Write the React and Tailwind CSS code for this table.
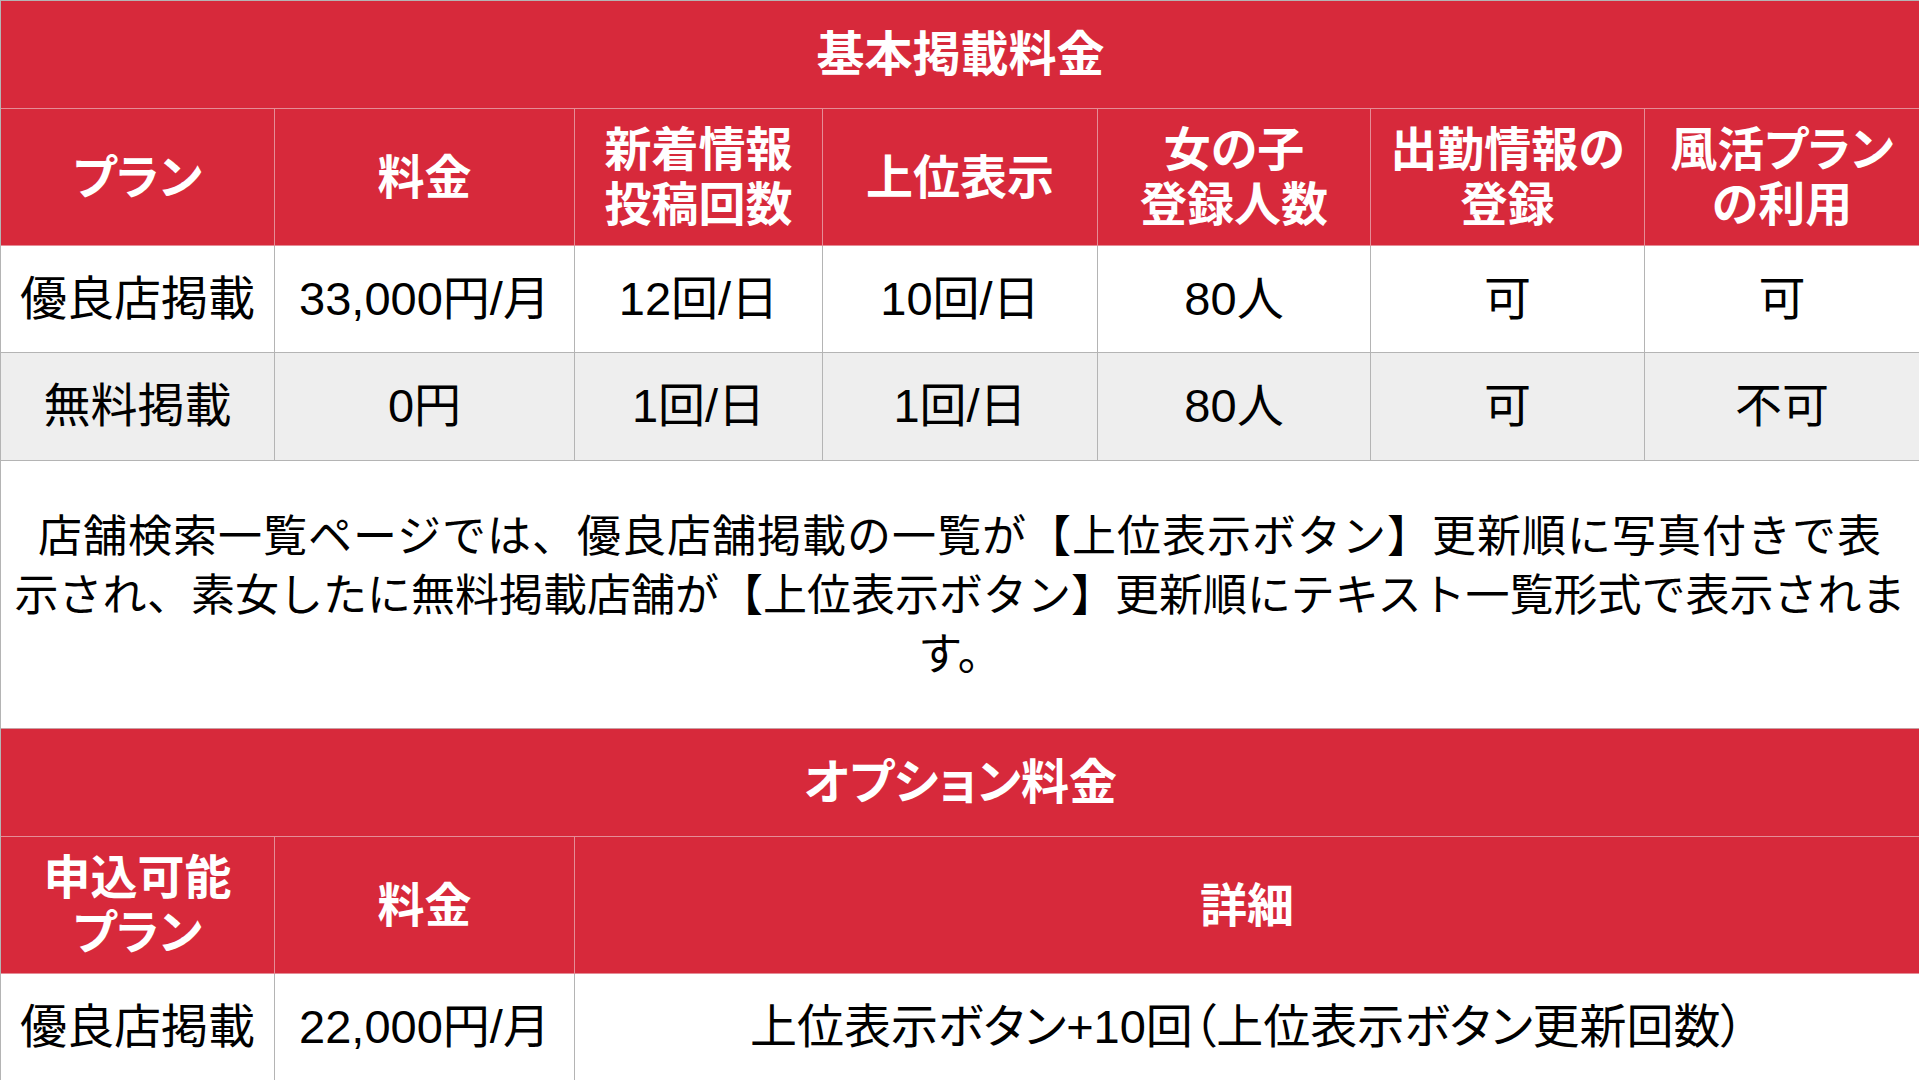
// App.jsx – 掲載料金表
const FONT = { fontFamily: '"Liberation Sans", "Noto Sans CJK JP", sans-serif' };

const basicHeads = [
  ["プラン"],
  ["料金"],
  ["新着情報", "投稿回数"],
  ["上位表示"],
  ["女の子", "登録人数"],
  ["出勤情報の", "登録"],
  ["風活プラン", "の利用"],
];

const basicRows = [
  { bg: "bg-white", cells: ["優良店掲載", "33,000円/月", "12回/日", "10回/日", "80人", "可", "可"] },
  { bg: "bg-[#eeeeee]", cells: ["無料掲載", "0円", "1回/日", "1回/日", "80人", "可", "不可"] },
];

const HeadCell = ({ lines }) => (
  <div className="h-[137px] flex flex-col items-center justify-center border-r border-b border-[#e58c96] bg-[#d7293b] text-white font-bold text-[47px] leading-[55px] [font-feature-settings:'palt']">
    {lines.map((l) => (
      <span key={l}>{l}</span>
    ))}
  </div>
);

const TitleRow = ({ children }) => (
  <div className="col-span-full h-[108px] flex items-center justify-center border-b border-[#e58c96] bg-[#d7293b] text-white font-bold text-[48px] [font-feature-settings:'palt']">
    {children}
  </div>
);

const BodyCell = ({ children, bg, h }) => (
  <div className={`${h} ${bg} flex items-center justify-center border-r border-b border-[#b4b4b4] text-black text-[47px] whitespace-nowrap [font-feature-settings:'palt']`}>
    {children}
  </div>
);

export default function App() {
  return (
    <div className="w-[1919px] h-[1080px] overflow-hidden bg-white border-t border-l border-[#b4b4b4]" style={FONT}>
      {/* 基本掲載料金 */}
      <div className="grid grid-cols-[274px_300px_248px_275px_273px_274px_275px]">
        <TitleRow>基本掲載料金</TitleRow>
        {basicHeads.map((lines, i) => (
          <HeadCell key={i} lines={lines} />
        ))}
        {basicRows.map((row, r) =>
          row.cells.map((c, i) => (
            <BodyCell key={`${r}-${i}`} bg={row.bg} h={r === 0 ? "h-[107px]" : "h-[108px]"}>
              {c}
            </BodyCell>
          ))
        )}
      </div>

      <div className="h-[268px] flex items-center justify-center border-b border-[#c9a0a4]">
        <p className="text-center text-black text-[44px] leading-[59px] whitespace-nowrap pt-[2px]">
          <span className="tracking-[1px]">店舗検索一覧ページでは、優良店舗掲載の一覧が【上位表示ボタン】更新順に写真付きで表</span>
          <br />
          示され、素女したに無料掲載店舗が【上位表示ボタン】更新順にテキスト一覧形式で表示されま
          <br />
          す。
        </p>
      </div>

      {/* オプション料金 */}
      <div className="grid grid-cols-[274px_300px_1345px]">
        <TitleRow>オプション料金</TitleRow>
        <HeadCell lines={["申込可能", "プラン"]} />
        <HeadCell lines={["料金"]} />
        <HeadCell lines={["詳細"]} />
        <BodyCell bg="bg-white" h="h-[107px]">優良店掲載</BodyCell>
        <BodyCell bg="bg-white" h="h-[107px]">22,000円/月</BodyCell>
        <BodyCell bg="bg-white" h="h-[107px]">上位表示ボタン+10回（上位表示ボタン更新回数）</BodyCell>
      </div>
    </div>
  );
}
